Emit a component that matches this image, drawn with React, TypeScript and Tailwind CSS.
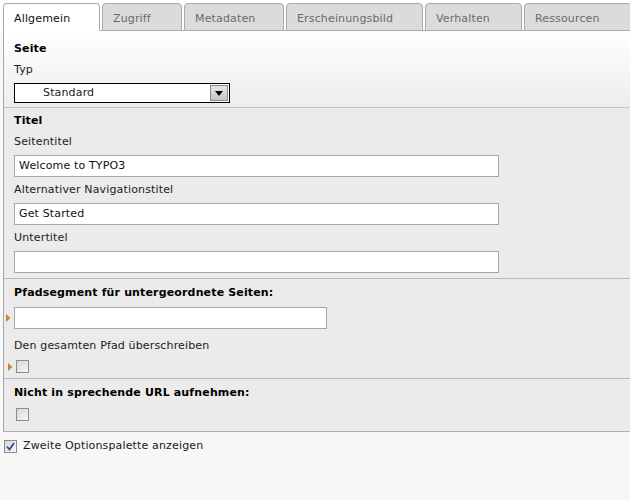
import React from "react";

const tabs = [
  { label: "Allgemein", w: "w-[97px]", active: true },
  { label: "Zugriff", w: "w-[80px]" },
  { label: "Metadaten", w: "w-[100px]" },
  { label: "Erscheinungsbild", w: "w-[137px]" },
  { label: "Verhalten", w: "w-[97px]" },
  { label: "Ressourcen", w: "w-[108px]" },
];

function Marker() {
  return (
    <svg width="5" height="10" viewBox="0 0 5 10" className="absolute left-[-8px] top-1/2 -translate-y-1/2">
      <path d="M0 1 L4.5 5 L0 9 Z" fill="#c8862a" />
    </svg>
  );
}

function Checkbox({ checked = false }: { checked?: boolean }) {
  return (
    <div className="w-[13px] h-[13px] border border-[#8c8c8c] bg-gradient-to-br from-[#d8d8d8] to-[#f6f6f6] flex items-center justify-center">
      {checked && (
        <svg width="9" height="9" viewBox="0 0 9 9">
          <path d="M1 4.5 L3.5 7.5 L8 1" stroke="#2c4b9c" strokeWidth="1.8" fill="none" />
        </svg>
      )}
    </div>
  );
}

function TextInput({ value = "", w = "w-[485px]" }: { value?: string; w?: string }) {
  return (
    <div className={`${w} h-[22px] border border-[#a6a6a6] bg-white px-[4px] flex items-center text-[#111]`}>
      {value}
    </div>
  );
}

export default function App() {
  return (
    <div className="w-[630px] h-[500px] overflow-hidden bg-[#f7f7f7] text-[11px] leading-[14px] tracking-[0.15px] text-[#1a1a1a] font-['DejaVu_Sans',Verdana,sans-serif]">
      {/* Tabs */}
      <div className="h-[31px] bg-white flex items-end gap-[2px] pl-[3px] pt-[3px]">
        {tabs.map((t) => (
          <div
            key={t.label}
            className={`${t.w} h-[28px] shrink-0 rounded-t-[4px] border border-[#a9a9a9] pl-[10px] pt-[3px] flex items-center ${
              t.active ? "bg-white border-b-white text-[#111] relative z-10" : "bg-[#dbdbdb] text-[#6a6a6a]"
            }`}
          >
            {t.label}
          </div>
        ))}
      </div>

      {/* Panel */}
      <div className="ml-[3px] border-l border-t border-[#a9a9a9] -mt-px">
        {/* Seite */}
        <div className="h-[77px] border-b border-[#c4c4c4] bg-gradient-to-b from-white to-[#ededed] pl-[10px] pt-[11px]">
          <div className="font-bold text-black">Seite</div>
          <div className="mt-[7px]">Typ</div>
          <div className="mt-[6px] w-[216px] h-[20px] border border-black bg-white flex items-center justify-between pl-[28px] pr-[1px]">
            <span>Standard</span>
            <div className="w-[18px] h-[16px] bg-gradient-to-b from-[#e6e6e6] to-[#c4c4c4] border border-[#8a8a8a] flex items-center justify-center">
              <svg width="8" height="5" viewBox="0 0 8 5">
                <path d="M0 0 H8 L4 5 Z" fill="#000" />
              </svg>
            </div>
          </div>
        </div>

        {/* Titel */}
        <div className="h-[171px] border-b border-[#b8b8b8] bg-[#ebebeb] pl-[10px] pt-[6px]">
          <div className="font-bold text-black">Titel</div>
          <div className="mt-[7px]">Seitentitel</div>
          <div className="mt-[6px]"><TextInput value="Welcome to TYPO3" /></div>
          <div className="mt-[6px]">Alternativer Navigationstitel</div>
          <div className="mt-[6px]"><TextInput value="Get Started" /></div>
          <div className="mt-[6px]">Untertitel</div>
          <div className="mt-[6px]"><TextInput /></div>
        </div>

        {/* Pfadsegment */}
        <div className="h-[100px] border-b border-[#b8b8b8] bg-[#ebebeb] pl-[10px] pt-[7px]">
          <div className="font-bold text-black">Pfadsegment für untergeordnete Seiten:</div>
          <div className="mt-[7px] relative w-fit">
            <Marker />
            <TextInput w="w-[313px]" />
          </div>
          <div className="mt-[10px]">Den gesamten Pfad überschreiben</div>
          <div className="mt-[7px] relative w-fit ml-[2px]">
            <Marker />
            <Checkbox />
          </div>
        </div>

        {/* Nicht in sprechende URL */}
        <div className="h-[53px] border-b border-[#b0b0b0] bg-[#ebebeb] pl-[10px] pt-[7px]">
          <div className="font-bold text-black">Nicht in sprechende URL aufnehmen:</div>
          <div className="mt-[8px] ml-[2px] w-fit">
            <Checkbox />
          </div>
        </div>
      </div>

      {/* Zweite Optionspalette */}
      <div className="flex items-center gap-[6px] pl-[4px] mt-[7px]">
        <Checkbox checked />
        <span>Zweite Optionspalette anzeigen</span>
      </div>
    </div>
  );
}
